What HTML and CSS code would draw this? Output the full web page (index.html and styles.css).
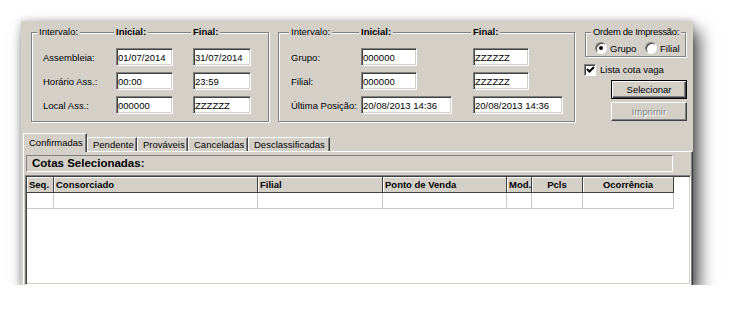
FILE: index.html
```html
<!DOCTYPE html>
<html lang="pt">
<head>
    <meta charset="UTF-8">
    <title>Seleção de Cotas</title>
    <link rel="stylesheet" href="styles.css">
</head>
<body>
    <div class="window">
        <div class="filters">
            <!-- Assembleia / horario / local -->
            <div class="group g1">
                <div class="head">
                    <span class="cap first">Intervalo:</span>
                    <span class="cap b">Inicial:</span>
                    <span class="cap b">Final:</span>
                </div>
                <div class="row">
                    <span class="lbl">Assembleia:</span>
                    <input class="field w57" value="01/07/2014" readonly>
                    <input class="field w58" value="31/07/2014" readonly>
                </div>
                <div class="row">
                    <span class="lbl">Horário Ass.:</span>
                    <input class="field w57" value="00:00" readonly>
                    <input class="field w58" value="23:59" readonly>
                </div>
                <div class="row">
                    <span class="lbl">Local Ass.:</span>
                    <input class="field w57" value="000000" readonly>
                    <input class="field w58" value="ZZZZZZ" readonly>
                </div>
            </div>

            <!-- Grupo / filial / ultima posicao -->
            <div class="group g2">
                <div class="head">
                    <span class="cap first">Intervalo:</span>
                    <span class="cap b">Inicial:</span>
                    <span class="cap b">Final:</span>
                </div>
                <div class="row">
                    <span class="lbl">Grupo:</span>
                    <input class="field w56" value="000000" readonly>
                    <input class="field w56" value="ZZZZZZ" readonly>
                </div>
                <div class="row">
                    <span class="lbl">Filial:</span>
                    <input class="field w56" value="000000" readonly>
                    <input class="field w56" value="ZZZZZZ" readonly>
                </div>
                <div class="row">
                    <span class="lbl">Última Posição:</span>
                    <input class="field w91" value="20/08/2013 14:36" readonly>
                    <input class="field w90" value="20/08/2013 14:36" readonly>
                </div>
            </div>

            <div class="side">
                <div class="group order">
                    <div class="head">
                        <span class="cap first">Ordem de Impressão:</span>
                    </div>
                    <div class="radios">
                        <span class="radio grp"><span class="dot on"><i></i></span>Grupo</span>
                        <span class="radio"><span class="dot"></span>Filial</span>
                    </div>
                </div>
                <div class="check">
                    <span class="box">
                        <svg width="9" height="9" viewBox="0 0 9 9"><path d="M1 4 L3.5 6.5 L8 2" fill="none" stroke="#000" stroke-width="2"/></svg>
                    </span>
                    Lista cota vaga
                </div>
                <button class="btn default">Selecionar</button>
                <button class="btn disabled">Imprimir</button>
            </div>
        </div>

        <div class="tabs">
            <span class="tab active w64">Confirmadas</span>
            <span class="tab w50">Pendente</span>
            <span class="tab w51">Prováveis</span>
            <span class="tab w60">Canceladas</span>
            <span class="tab w82">Desclassificadas</span>
        </div>

        <div class="tab-panel">
            <div class="caption">Cotas Selecionadas:</div>
            <div class="grid">
                <div class="grid-row header">
                    <span class="c27">Seq.</span>
                    <span class="c204">Consorciado</span>
                    <span class="c125">Filial</span>
                    <span class="c124">Ponto de Venda</span>
                    <span class="c25">Mod.</span>
                    <span class="c51 center">Pcls</span>
                    <span class="c91 center">Ocorrência</span>
                </div>
                <div class="grid-row data">
                    <span class="c27"></span>
                    <span class="c204"></span>
                    <span class="c125"></span>
                    <span class="c124"></span>
                    <span class="c25"></span>
                    <span class="c51"></span>
                    <span class="c91"></span>
                </div>
            </div>
        </div>
    </div>
</body>
</html>
```

FILE: styles.css
```css
/* classic win look */

body {
    margin: 0;
    background-color: #fff;
    font-family: "Liberation Sans", Arial, sans-serif;
    font-size: 9.5px;
    color: #000;
}

.window {
    margin: 21px 0 0 21px;
    width: 672px;
    height: 264px;
    background-color: #d4d0c8;
    overflow: hidden;
    display: flex;
    flex-direction: column;
    box-shadow: 6px 10px 16px rgba(0,0,0,0.7), 0 0 7px rgba(0,0,0,0.22);
}

.filters {
    display: flex;
    align-items: flex-start;
    padding: 11px 0 0 10px;
}

/* etched group box */
.group {
    box-sizing: border-box;
    border: 1px solid #808080;
    box-shadow: inset 1px 1px 0 #fff, 1px 1px 0 #fff;
    padding-bottom: 7px;
}

.g1 {
    --cols: 84px 77px 1fr;
    width: 238px;
}

.g2 {
    --cols: 82px 112px 1fr;
    width: 297px;
    margin-left: 9px;
}

.head, .row {
    display: grid;
    grid-template-columns: var(--cols);
    align-items: center;
}

.head {
    height: 12px;
    line-height: 12px;
    margin-top: -7px;
    margin-bottom: 10px;
}

.row + .row {
    margin-top: 6px;
}

.cap {
    background-color: #d4d0c8;
    padding: 0 2px;
    justify-self: start;
    white-space: nowrap;
}

.cap.first {
    margin-left: 5px;
}

.g2 .cap.first {
    margin-left: 10px;
}

.cap.b {
    font-weight: bold;
    margin-left: -2px;
}

.lbl {
    padding-left: 11px;
    white-space: nowrap;
}

.g2 .lbl {
    padding-left: 12px;
}

/* sunken edit box */
.field {
    box-sizing: border-box;
    height: 18px;
    margin: 0;
    padding: 0 1px;
    font: inherit;
    color: #000;
    background-color: #fff;
    border: 1px solid;
    border-color: #808080 #fff #fff #808080;
    box-shadow: inset 1px 1px 0 #404040, inset -1px -1px 0 #d4d0c8;
    outline: none;
}

.w56 { width: 56px; }
.w57 { width: 57px; }
.w58 { width: 58px; }
.w90 { width: 90px; }
.w91 { width: 91px; }

/* right column */
.side {
    width: 103px;
    margin-left: 9px;
    display: flex;
    flex-direction: column;
}

.order {
    --cols: 1fr;
    width: 101px;
    margin-left: 1px;
    padding-bottom: 2px;
}

.order .head {
    margin-bottom: 4px;
}

.order .cap.first {
    margin-left: 5px;
    letter-spacing: -0.3px;
}

.radios {
    display: flex;
    align-items: center;
    height: 12px;
    padding-left: 9px;
}

.radio {
    display: flex;
    align-items: center;
    gap: 3px;
}

.radio.grp {
    width: 50px;
}

.dot {
    box-sizing: border-box;
    width: 12px;
    height: 12px;
    border-radius: 50%;
    background-color: #fff;
    border: 1px solid;
    border-color: #808080 #fff #fff #808080;
    box-shadow: inset 1px 1px 0 #404040;
    display: flex;
    align-items: center;
    justify-content: center;
}

.dot i {
    width: 4px;
    height: 4px;
    border-radius: 50%;
    background-color: #000;
}

.check {
    display: flex;
    align-items: center;
    gap: 4px;
    height: 13px;
    margin-top: 6px;
}

.box {
    box-sizing: border-box;
    width: 12px;
    height: 12px;
    background-color: #fff;
    border: 1px solid;
    border-color: #808080 #fff #fff #808080;
    box-shadow: inset 1px 1px 0 #404040;
    display: flex;
    align-items: center;
    justify-content: center;
}

.box svg {
    display: block;
}

.btn {
    box-sizing: border-box;
    width: 76px;
    height: 19px;
    margin-left: 27px;
    padding: 0;
    font: inherit;
    background-color: #d4d0c8;
    color: #000;
}

.btn.default {
    margin-top: 4px;
    border: 1px solid #000;
    box-shadow: inset 1px 1px 0 #fff, inset -1px -1px 0 #404040, inset -2px -2px 0 #808080;
}

.btn.disabled {
    margin-top: 3px;
    border: 1px solid;
    border-color: #fff #404040 #404040 #fff;
    box-shadow: inset -1px -1px 0 #808080;
    color: #808080;
    text-shadow: 1px 1px 0 #fff;
}

/* tabs */
.tabs {
    display: flex;
    align-items: flex-end;
    height: 18px;
    margin-top: 11px;
    padding-left: 2px;
}

.tab {
    box-sizing: border-box;
    height: 14px;
    line-height: 13px;
    padding-left: 5px;
    border-top: 1px solid #fff;
    border-left: 1px solid #fff;
    border-right: 1px solid #404040;
    box-shadow: inset -1px 0 0 #808080;
    white-space: nowrap;
}

.tab.active {
    position: relative;
    z-index: 1;
    height: 19px;
    margin-bottom: -1px;
    padding-top: 2px;
    background-color: #d4d0c8;
}

.w50 { width: 50px; }
.w51 { width: 51px; }
.w60 { width: 60px; }
.w64 { width: 64px; }
.w82 { width: 82px; }

.tab-panel {
    flex: 1;
    display: flex;
    flex-direction: column;
    margin-left: 2px;
    padding: 3px 0 0 1px;
    border-top: 1px solid #fff;
    border-left: 1px solid #fff;
    border-right: 1px solid #404040;
    box-shadow: inset -1px 0 0 #808080;
}

.caption {
    box-sizing: border-box;
    width: 647px;
    height: 17px;
    margin-left: 1px;
    padding-left: 5px;
    line-height: 15px;
    font-size: 11.5px;
    font-weight: bold;
    border: 1px solid;
    border-color: #808080 #fff #fff #808080;
}

.grid {
    flex: 1;
    margin: 3px 1px 0 0;
    background-color: #fff;
    border: 1px solid;
    border-color: #808080 #fff #fff #808080;
    box-shadow: inset 1px 1px 0 #404040, inset -1px -1px 0 #d4d0c8;
    padding: 1px 0 0 1px;
}

.grid-row {
    display: flex;
    height: 16px;
}

.grid-row span {
    box-sizing: border-box;
    height: 16px;
    line-height: 15px;
    padding-left: 2px;
    white-space: nowrap;
}

.header span {
    background-color: #d4d0c8;
    font-weight: bold;
    border-right: 1px solid #404040;
    border-bottom: 1px solid #404040;
    box-shadow: inset 1px 1px 0 #fff;
}

.header span.center {
    text-align: center;
    padding-left: 0;
}

.data span {
    border-right: 1px solid #c8c8c8;
    border-bottom: 1px solid #c8c8c8;
}

.c25 { width: 25px; }
.c27 { width: 27px; }
.c51 { width: 51px; }
.c91 { width: 91px; }
.c124 { width: 124px; }
.c125 { width: 125px; }
.c204 { width: 204px; }
```
